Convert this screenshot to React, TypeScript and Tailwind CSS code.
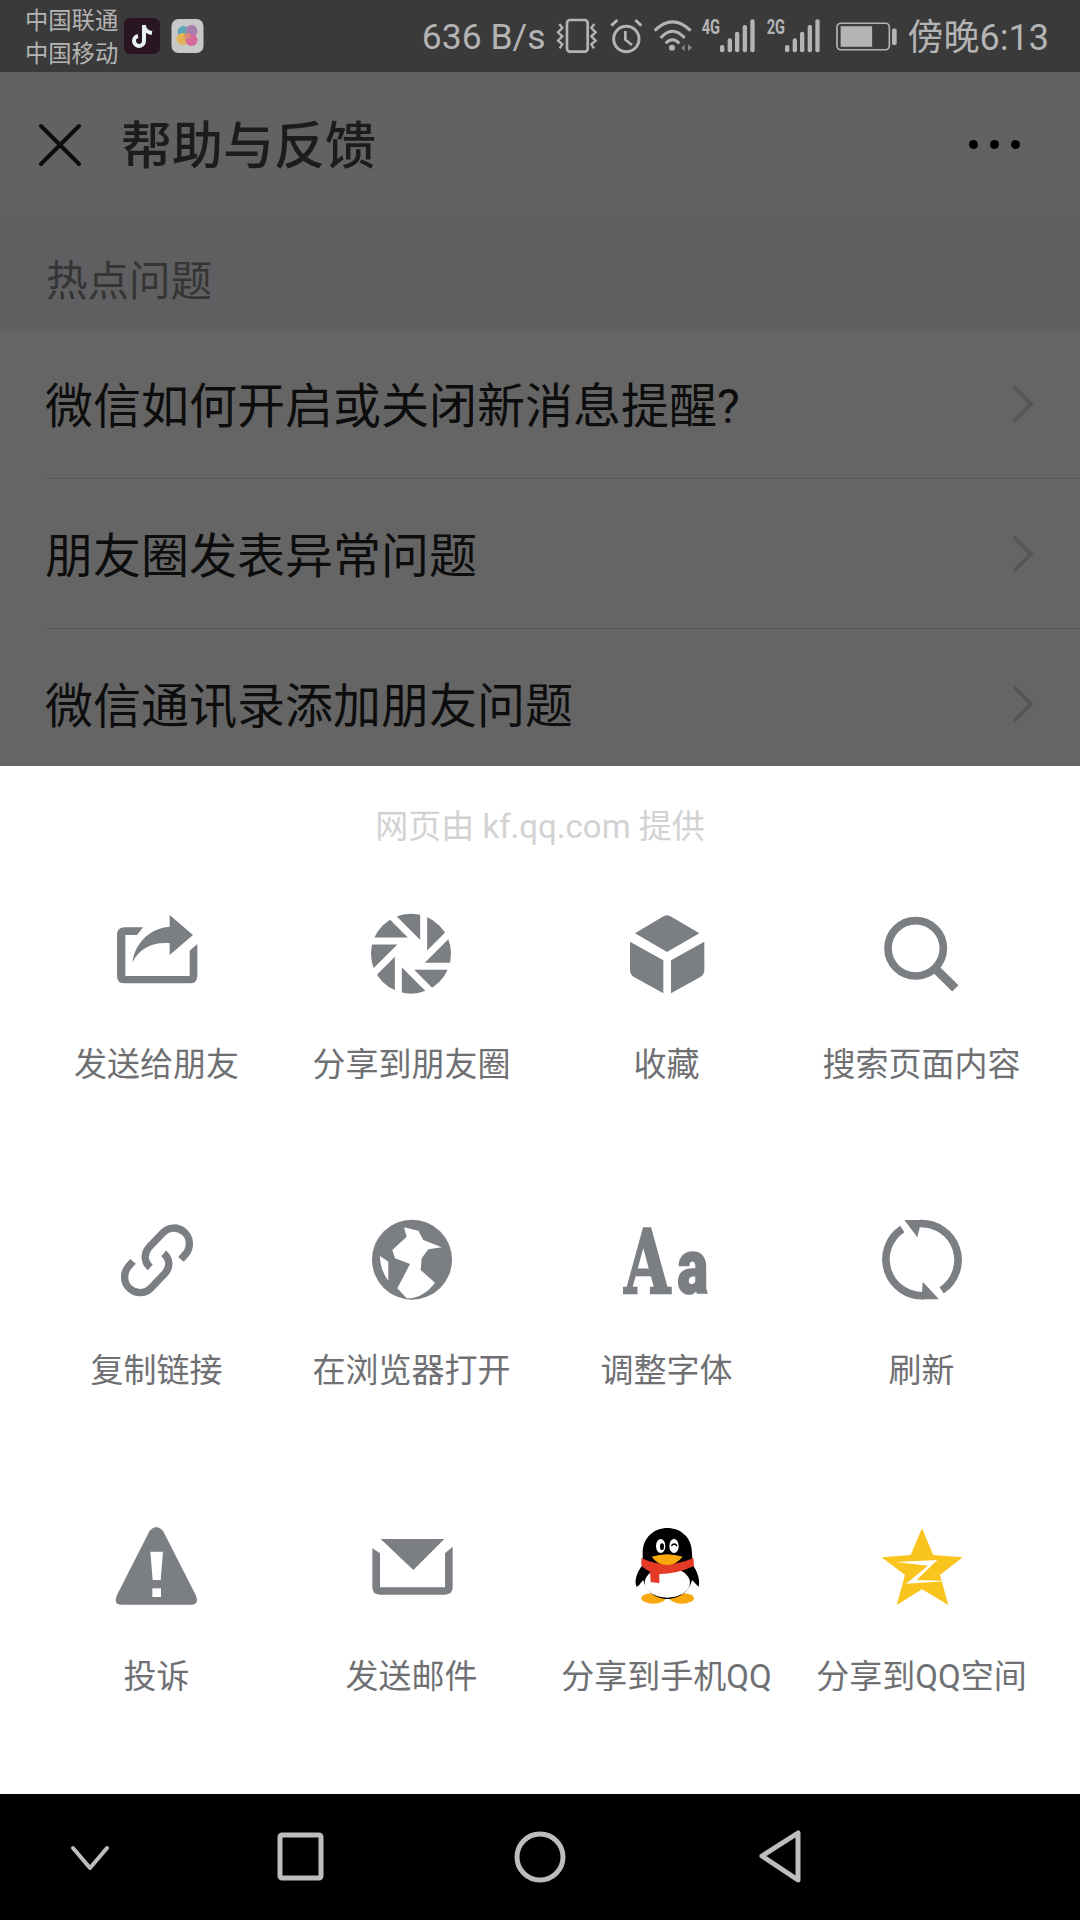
import React from 'react';

const GRAY = '#7b7e82';

const Box = ({ view, children }: { view: string; children: React.ReactNode }) => (
  <svg viewBox={view} className="w-[96px] h-[96px] shrink-0 overflow-visible" fill={GRAY}>
    {children}
  </svg>
);

const SHUTTER_ANGLES = [0, 45, 90, 135, 180, 225, 270, 315];

const ShareIcon = () => (
  <Box view="148 81 288 288">
    <path d="M250 142L195 142Q172 142 172 165L172 287Q172 310 195 310L390 310Q413 310 413 287L413 192L390 212L390 288L197 288L197 165L232 165Z" />
    <path d="M330 105L400 165L330 225L330 190C280 185 240 205 218 247C225 195 265 145 330 140Z" />
  </Box>
);

const MomentsIcon = () => (
  <Box view="912 81 288 288">
    <circle cx="1053" cy="221" r="120" />
    {SHUTTER_ANGLES.map((a) => (
      <line key={a} x1="1091" y1="90" x2="1091" y2="215" stroke="#fff" strokeWidth="21" transform={`rotate(${a} 1053 221)`} />
    ))}
    <circle cx="1053" cy="221" r="48" fill="#fff" />
  </Box>
);

const CubeIcon = () => (
  <Box view="177 81 288 288">
    <path d="M308 110Q321 101 334 110L418 160L321 216L225 160Z" />
    <path d="M210 185L310 241L310 340L222 291Q210 284 210 270Z" />
    <path d="M433 185L333 241L333 340L421 291Q433 284 433 270Z" />
  </Box>
);

const SearchIcon = () => (
  <Box view="942 81 288 288">
    <circle cx="1067" cy="205" r="83" fill="none" stroke={GRAY} strokeWidth="23" />
    <line x1="1122" y1="262" x2="1186" y2="325" stroke={GRAY} strokeWidth="27" />
  </Box>
);

const LinkIcon = () => (
  <Box view="148 69 288 288">
    <g fill="none" stroke={GRAY} strokeWidth="22">
      <path d="M364 208L378 192C395 172 392 140 372 125C352 108 325 112 310 128L268 172C252 190 252 215 272 232" />
      <path d="M220 214L206 230C189 250 192 282 212 297C232 314 259 310 274 294L316 250C332 232 332 207 312 190" />
    </g>
  </Box>
);

const GlobeIcon = () => (
  <Box view="912 69 288 288">
    <circle cx="1056" cy="209" r="120" />
    <path fill="#fff" d="M1032 112L1075 122L1090 150L1145 172L1105 178L1085 205L1082 240L1125 278Q1090 325 1040 325L1012 295L1050 222L1005 205L997 180L1040 140Z" />
    <path fill="#fff" d="M960 198L985 215L985 272Q960 240 960 198Z" />
  </Box>
);

const FontIcon = () => (
  <Box view="177 69 288 288">
    <text transform="translate(193 308) scale(0.68 1)" fontSize="262" fontWeight="700" fontFamily="'DejaVu Serif', serif" stroke={GRAY} strokeWidth="7">A</text>
    <text transform="translate(352 308) scale(0.76 1)" fontSize="230" fontWeight="900" fontFamily="Roboto, sans-serif" stroke={GRAY} strokeWidth="5">a</text>
  </Box>
);

const RefreshIcon = () => (
  <Box view="942 69 288 288">
    <g fill="none" stroke={GRAY} strokeWidth="23">
      <path d="M1080 101A109 109 0 0 1 1145 301" />
      <path d="M1092 317A109 109 0 0 1 1027 117" />
    </g>
    <path d="M1033 90L1085 90L1072 142Z" />
    <path d="M1137 328L1085 328L1088 275Z" />
  </Box>
);

const WarnIcon = () => (
  <Box view="148 57 288 288">
    <path d="M270 92Q290 70 310 92L408 285Q420 314 395 314L186 314Q160 314 172 285Z" />
    <path fill="#fff" d="M272 155L310 155L303 240L279 240Z" />
    <rect x="278" y="265" width="26" height="26" fill="#fff" />
  </Box>
);

const MailIcon = () => (
  <Box view="912 57 288 288">
    <path d="M962 117L1153 117L1060 210Z" />
    <path d="M937 145L960 160L960 262L1155 262L1155 160L1178 140L1178 262Q1178 284 1155 284L960 284Q937 284 937 262Z" />
  </Box>
);

const PenguinIcon = () => (
  <Box view="57 57 288 288">
    <ellipse cx="160" cy="295" rx="36" ry="16" fill="#f9a90e" />
    <ellipse cx="246" cy="295" rx="36" ry="16" fill="#f9a90e" />
    <path fill="#000" d="M128 160C128 110 165 84 202 84C240 84 276 110 276 160L278 195C290 210 302 240 296 260C285 250 282 245 276 240C270 270 240 297 202 297C165 297 135 270 130 240C122 248 118 258 110 260C100 240 115 210 128 195Z" />
    <ellipse cx="202" cy="248" rx="68" ry="45" fill="#fff" />
    <ellipse cx="182" cy="138" rx="14" ry="21" fill="#fff" />
    <ellipse cx="222" cy="138" rx="14" ry="21" fill="#fff" />
    <ellipse cx="186" cy="140" rx="6" ry="10" fill="#000" />
    <path d="M214 138Q222 126 231 138" fill="none" stroke="#000" strokeWidth="4" />
    <path fill="#e53a25" d="M124 174Q200 210 280 174L282 198Q230 222 178 222L178 250L152 246L150 215Q130 205 124 195Z" />
    <path fill="#f9a90e" d="M155 170Q200 155 248 170Q228 195 202 195Q172 195 155 170Z" />
  </Box>
);

const StarIcon = () => (
  <Box view="822 57 288 288">
    <path fill="#fac41e" d="M966 85L1000 165L1088 172L1020 225L1045 315L966 268L890 315L915 225L845 172L932 165Z" />
    <path fill="#fff" d="M888 186L1012 180L950 240L1046 243L918 251L984 197Z" />
  </Box>
);

const ACTIONS = [
  { icon: <ShareIcon />, label: '发送给朋友' },
  { icon: <MomentsIcon />, label: '分享到朋友圈' },
  { icon: <CubeIcon />, label: '收藏' },
  { icon: <SearchIcon />, label: '搜索页面内容' },
  { icon: <LinkIcon />, label: '复制链接' },
  { icon: <GlobeIcon />, label: '在浏览器打开' },
  { icon: <FontIcon />, label: '调整字体' },
  { icon: <RefreshIcon />, label: '刷新' },
  { icon: <WarnIcon />, label: '投诉' },
  { icon: <MailIcon />, label: '发送邮件' },
  { icon: <PenguinIcon />, label: '分享到手机QQ' },
  { icon: <StarIcon />, label: '分享到QQ空间' },
];

const QUESTIONS = ['微信如何开启或关闭新消息提醒?', '朋友圈发表异常问题', '微信通讯录添加朋友问题'];

const BARS = [
  { x: 82, top: 105 },
  { x: 105, top: 85 },
  { x: 127, top: 65 },
  { x: 150, top: 45 },
  { x: 173, top: 28 },
];

const Signal = ({ tag }: { tag: string }) => (
  <svg viewBox="25 27 165 102" className="w-[55px] h-[34px] overflow-visible" fill="#b4b4b4">
    <text x="27" y="72" fontSize="58" fontWeight="700" fontFamily="Roboto, sans-serif" textLength="55" lengthAdjust="spacingAndGlyphs">{tag}</text>
    {BARS.map((b) => (
      <rect key={b.x} x={b.x} y={b.top} width="13" height={127 - b.top} rx="6" />
    ))}
  </svg>
);

const StatusIcons = () => (
  <div className="flex items-center">
    {/* vibrate */}
    <svg viewBox="24 27 126 108" className="w-[42px] h-[36px]" fill="none" stroke="#b4b4b4" strokeWidth="8">
      <rect x="57" y="33" width="62" height="95" rx="9" />
      <path d="M34 45L43 57L30 70L43 82L30 95L43 106L35 118" strokeWidth="7" />
      <path d="M139 45L130 57L143 70L130 82L143 95L130 106L138 118" strokeWidth="7" />
    </svg>
    {/* alarm */}
    <svg viewBox="183 27 105 108" className="w-[35px] h-[36px] ml-[11px]" fill="none" stroke="#b4b4b4" strokeWidth="9">
      <circle cx="235" cy="90" r="38" />
      <path d="M232 66L232 92L252 108" strokeWidth="8" />
      <path d="M190 50L208 33M280 50L262 33" />
    </svg>
    {/* wifi */}
    <svg viewBox="315 27 120 108" className="w-[40px] h-[36px] ml-[9px]" fill="none" stroke="#b4b4b4" strokeWidth="9">
      <path d="M320 65Q373 12 428 65" />
      <path d="M338 87Q373 46 410 87" />
      <path d="M353 103Q373 82 394 103" />
      <circle cx="372" cy="116" r="9" fill="#b4b4b4" stroke="none" />
      <path d="M400 118L410 106L410 126ZM420 106L432 116L420 126Z" fill="#8a8a8a" stroke="none" />
    </svg>
    <div className="ml-[8px]"><Signal tag="4G" /></div>
    <div className="ml-[10px]"><Signal tag="2G" /></div>
    {/* battery */}
    <svg viewBox="428 36 184 86" className="w-[61px] h-[29px] ml-[15px]" fill="none">
      <rect x="431" y="39" width="158" height="80" rx="12" stroke="#b4b4b4" strokeWidth="5" />
      <rect x="442" y="48" width="95" height="62" fill="#b4b4b4" />
      <rect x="597" y="55" width="14" height="50" rx="5" fill="#b4b4b4" />
    </svg>
  </div>
);

export default function App() {
  return (
    <div className="flex flex-col w-[1080px] h-[1920px] overflow-hidden bg-white font-['Roboto','Noto_Sans_CJK_SC',sans-serif]">
      {/* Dimmed page behind the sheet */}
      <div className="h-[766px] shrink-0 overflow-hidden bg-[#656565]">
        <div className="h-[72px] bg-[#3a3a3a] flex items-center justify-between pl-[25px] pr-[31px] text-[#b4b4b4]">
          <div className="flex items-center">
            <div className="text-[23.3px] leading-[33px] w-[99px] pt-[3px]">
              <div>中国联通</div>
              <div>中国移动</div>
            </div>
            <svg viewBox="0 0 36 36" className="w-[36px] h-[36px]">
              <rect width="36" height="36" rx="6" fill="#2a1622" />
              <path d="M20 7L20 23A5 5 0 1 1 14 18" fill="none" stroke="#e9f3f2" strokeWidth="4" />
              <path d="M20 8Q21 14 28 15" fill="none" stroke="#e9f3f2" strokeWidth="4" />
            </svg>
            <svg viewBox="0 0 32 34" className="w-[33px] h-[34px] ml-[11px]">
              <rect width="32" height="34" rx="7" fill="#c8c8c8" />
              <circle cx="12" cy="13" r="6" fill="#5ba7b8" />
              <circle cx="20" cy="12" r="6" fill="#a67fb0" />
              <circle cx="11" cy="20" r="6" fill="#e2b457" />
              <circle cx="20" cy="21" r="6" fill="#d8699b" />
              <circle cx="16" cy="17" r="3" fill="#d98a7a" />
            </svg>
          </div>
          <div className="flex items-center">
            <span className="text-[35.5px] mr-[10px] pt-[3px]">636 B/s</span>
            <StatusIcons />
            <span className="text-[36px] ml-[11px] pt-[3px]">傍晚6:13</span>
          </div>
        </div>

        <div className="h-[146px] bg-[#626262] border-b border-[#5a5a5a] flex items-center">
          <svg viewBox="0 0 44 44" className="w-[44px] h-[44px] ml-[38px]" fill="none" stroke="#0d0d0d" strokeWidth="4" strokeLinecap="round">
            <path d="M3 3L41 41M41 3L3 41" />
          </svg>
          <span className="ml-[39px] pt-[5px] text-[51px] font-medium text-[#1c1c1c]">帮助与反馈</span>
          <div className="ml-auto mr-[60px] flex gap-[12px]">
            <div className="w-[9px] h-[9px] rounded-full bg-black" />
            <div className="w-[9px] h-[9px] rounded-full bg-black" />
            <div className="w-[9px] h-[9px] rounded-full bg-black" />
          </div>
        </div>

        <div className="h-[111px] bg-[#5f5f61] pl-[46px] pt-[18px] flex items-center text-[41.5px] text-[#353535]">热点问题</div>

        {QUESTIONS.map((q) => (
          <div key={q} className="h-[150px] pl-[46px]">
            <div className="h-full flex items-center justify-between border-b border-[#585858] pr-[46px] text-[48px] text-[#0d0d0d]">
              <span className="pt-[6px] -ml-[1px]">{q}</span>
              <svg viewBox="0 0 22 38" className="w-[22px] h-[38px]" fill="none" stroke="#565656" strokeWidth="4">
                <path d="M2 2L19 19L2 36" />
              </svg>
            </div>
          </div>
        ))}
      </div>

      {/* Bottom sheet */}
      <div className="flex-1 min-h-0 overflow-hidden">
        <div className="pt-[39px] h-[84px] text-center text-[33px] leading-[44px] text-[#d2d2d2]">网页由 kf.qq.com 提供</div>
        <div className="mt-[57px] grid grid-cols-4 auto-rows-[306px] pl-[29px] pr-[31px]">
          {ACTIONS.map((a) => (
            <div key={a.label} className="flex flex-col items-center">
              {a.icon}
              <div className="mt-[40px] text-[33px] leading-[44px] text-[#6f7073] whitespace-nowrap">{a.label}</div>
            </div>
          ))}
        </div>
      </div>

      {/* Navigation bar */}
      <div className="h-[126px] shrink-0 bg-black flex items-center">
        <svg viewBox="0 0 1080 126" className="w-[1080px] h-[126px]" fill="none" stroke="#bdbdbd" strokeWidth="5" strokeLinejoin="round" strokeLinecap="round">
          <path d="M73 54L90 74L107 54" strokeWidth="4" />
          <rect x="280" y="41" width="41" height="43" rx="2" />
          <circle cx="540" cy="63" r="23" />
          <path d="M798 39L798 86L762 62Z" />
        </svg>
      </div>
    </div>
  );
}
